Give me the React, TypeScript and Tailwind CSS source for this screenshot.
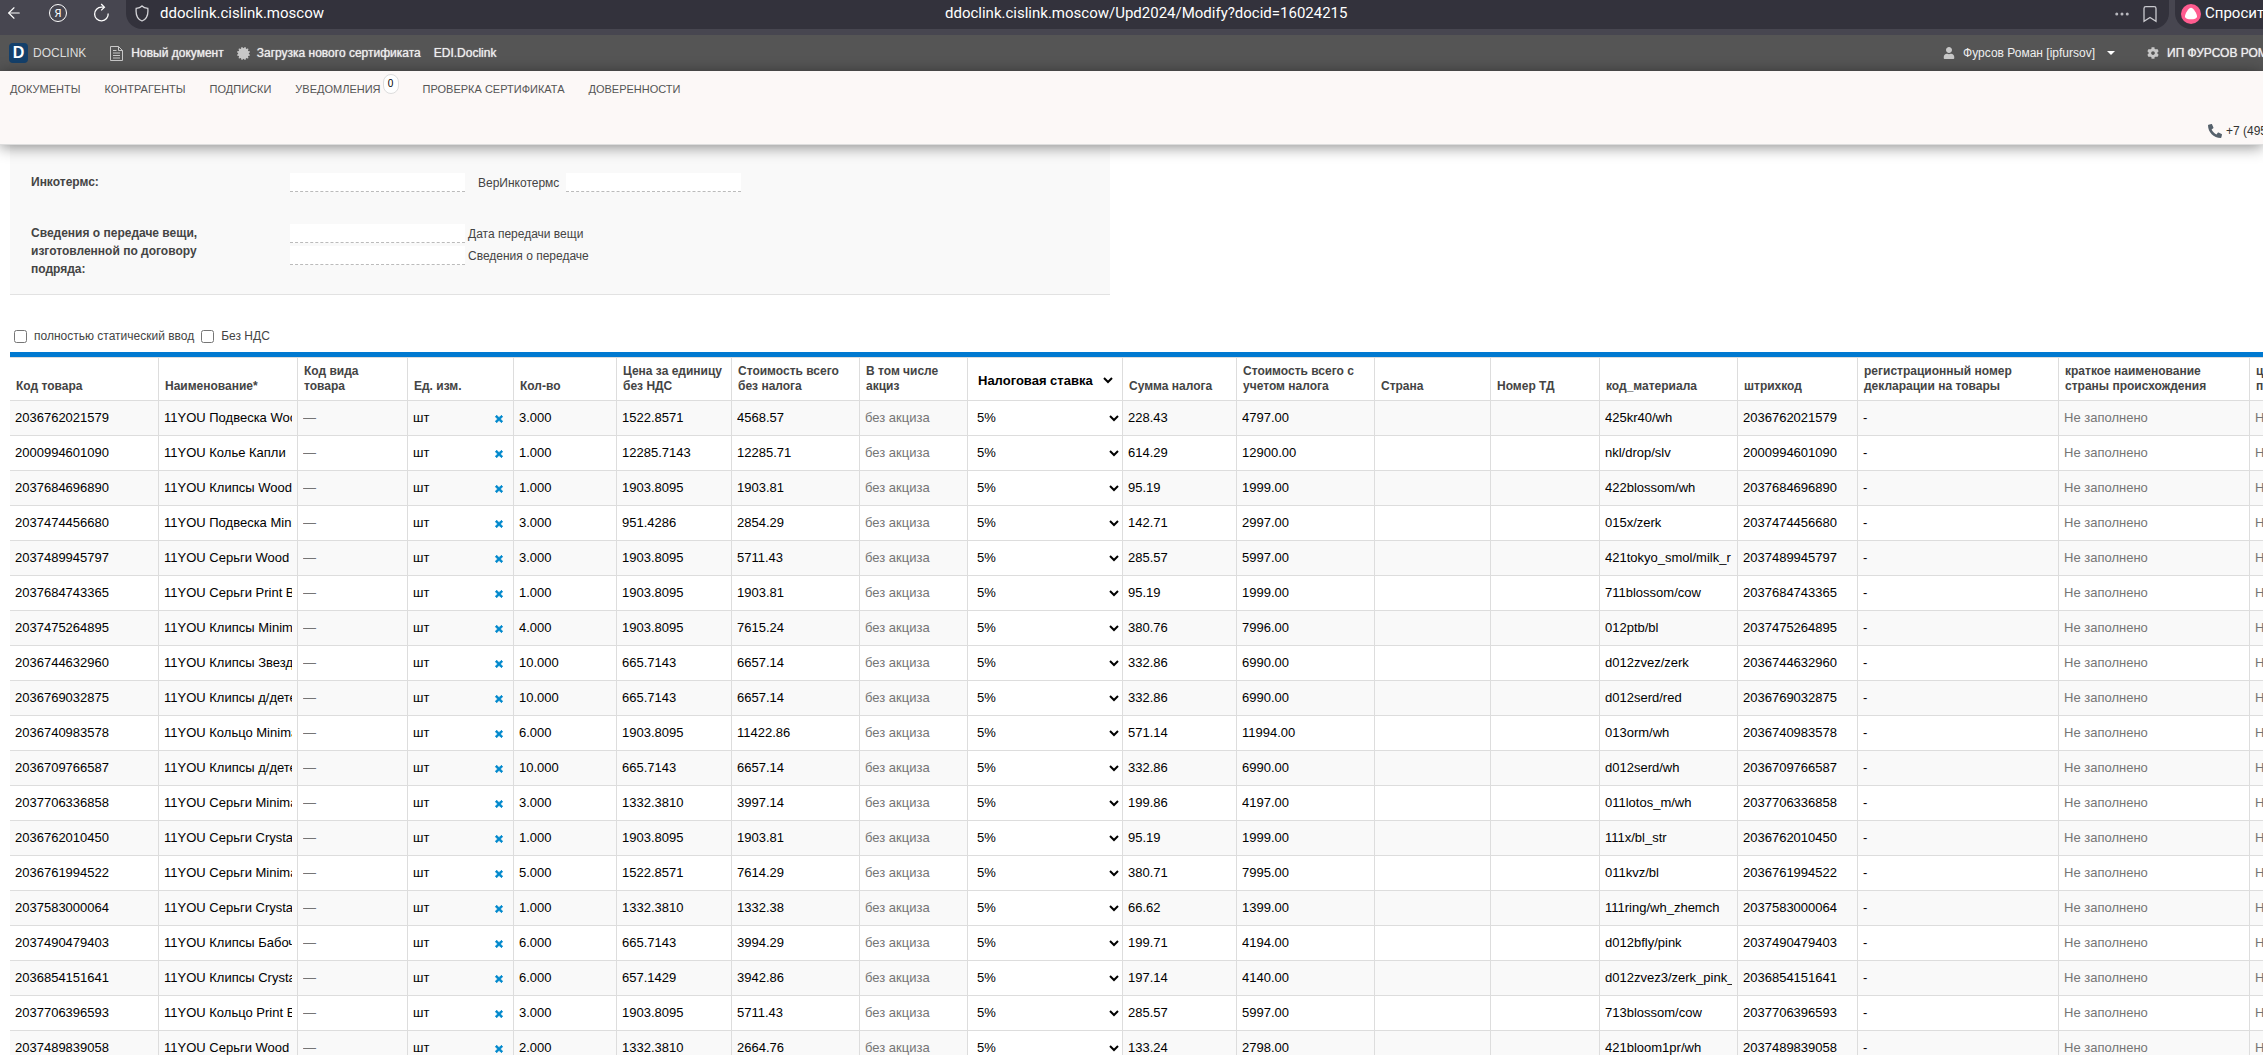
import React from "react";
import { ArrowLeft, Ellipsis } from "lucide-react";
import { FaCertificate, FaCog, FaPhone, FaTimes, FaUser } from "react-icons/fa";

type Item = {
  code: string;
  name: string;
  qty: string;
  price: string;
  net: string;
  tax: string;
  total: string;
  material: string;
};

const items: Item[] = [
  { code: "2036762021579", name: "11YOU Подвеска Wood", qty: "3.000", price: "1522.8571", net: "4568.57", tax: "228.43", total: "4797.00", material: "425kr40/wh" },
  { code: "2000994601090", name: "11YOU Колье Капли", qty: "1.000", price: "12285.7143", net: "12285.71", tax: "614.29", total: "12900.00", material: "nkl/drop/slv" },
  { code: "2037684696890", name: "11YOU Клипсы Wood", qty: "1.000", price: "1903.8095", net: "1903.81", tax: "95.19", total: "1999.00", material: "422blossom/wh" },
  { code: "2037474456680", name: "11YOU Подвеска Minimal", qty: "3.000", price: "951.4286", net: "2854.29", tax: "142.71", total: "2997.00", material: "015x/zerk" },
  { code: "2037489945797", name: "11YOU Серьги Wood", qty: "3.000", price: "1903.8095", net: "5711.43", tax: "285.57", total: "5997.00", material: "421tokyo_smol/milk_r" },
  { code: "2037684743365", name: "11YOU Серьги Print B", qty: "1.000", price: "1903.8095", net: "1903.81", tax: "95.19", total: "1999.00", material: "711blossom/cow" },
  { code: "2037475264895", name: "11YOU Клипсы Minimal", qty: "4.000", price: "1903.8095", net: "7615.24", tax: "380.76", total: "7996.00", material: "012ptb/bl" },
  { code: "2036744632960", name: "11YOU Клипсы Звезды", qty: "10.000", price: "665.7143", net: "6657.14", tax: "332.86", total: "6990.00", material: "d012zvez/zerk" },
  { code: "2036769032875", name: "11YOU Клипсы д/детей", qty: "10.000", price: "665.7143", net: "6657.14", tax: "332.86", total: "6990.00", material: "d012serd/red" },
  { code: "2036740983578", name: "11YOU Кольцо Minimal", qty: "6.000", price: "1903.8095", net: "11422.86", tax: "571.14", total: "11994.00", material: "013orm/wh" },
  { code: "2036709766587", name: "11YOU Клипсы д/детей", qty: "10.000", price: "665.7143", net: "6657.14", tax: "332.86", total: "6990.00", material: "d012serd/wh" },
  { code: "2037706336858", name: "11YOU Серьги Minimal", qty: "3.000", price: "1332.3810", net: "3997.14", tax: "199.86", total: "4197.00", material: "011lotos_m/wh" },
  { code: "2036762010450", name: "11YOU Серьги Crystal", qty: "1.000", price: "1903.8095", net: "1903.81", tax: "95.19", total: "1999.00", material: "111x/bl_str" },
  { code: "2036761994522", name: "11YOU Серьги Minimal", qty: "5.000", price: "1522.8571", net: "7614.29", tax: "380.71", total: "7995.00", material: "011kvz/bl" },
  { code: "2037583000064", name: "11YOU Серьги Crystal", qty: "1.000", price: "1332.3810", net: "1332.38", tax: "66.62", total: "1399.00", material: "111ring/wh_zhemch" },
  { code: "2037490479403", name: "11YOU Клипсы Бабочки", qty: "6.000", price: "665.7143", net: "3994.29", tax: "199.71", total: "4194.00", material: "d012bfly/pink" },
  { code: "2036854151641", name: "11YOU Клипсы Crystal", qty: "6.000", price: "657.1429", net: "3942.86", tax: "197.14", total: "4140.00", material: "d012zvez3/zerk_pink_" },
  { code: "2037706396593", name: "11YOU Кольцо Print B", qty: "3.000", price: "1903.8095", net: "5711.43", tax: "285.57", total: "5997.00", material: "713blossom/cow" },
  { code: "2037489839058", name: "11YOU Серьги Wood", qty: "2.000", price: "1332.3810", net: "2664.76", tax: "133.24", total: "2798.00", material: "421bloom1pr/wh" },
];

const columns = [
  { title: "Код товара", width: "w-[148px]" },
  { title: "Наименование*", width: "w-[139px]" },
  { title: "Код вида товара", width: "w-[110px]" },
  { title: "Ед. изм.", width: "w-[106px]" },
  { title: "Кол-во", width: "w-[103px]" },
  { title: "Цена за единицу без НДС", width: "w-[115px]" },
  { title: "Стоимость всего без налога", width: "w-[128px]" },
  { title: "В том числе акциз", width: "w-[108px]" },
  { title: "Налоговая ставка", width: "w-[155px]" },
  { title: "Сумма налога", width: "w-[114px]" },
  { title: "Стоимость всего с учетом налога", width: "w-[138px]" },
  { title: "Страна", width: "w-[116px]" },
  { title: "Номер ТД", width: "w-[109px]" },
  { title: "код_материала", width: "w-[138px]" },
  { title: "штрихкод", width: "w-[120px]" },
  { title: "регистрационный номер декларации на товары", width: "w-[201px]" },
  { title: "краткое наименование страны происхождения", width: "w-[191px]" },
  { title: "цифровой код происхождения", width: "w-[140px]" },
];

const menu = ["ДОКУМЕНТЫ", "КОНТРАГЕНТЫ", "ПОДПИСКИ", "УВЕДОМЛЕНИЯ", "ПРОВЕРКА СЕРТИФИКАТА", "ДОВЕРЕННОСТИ"];

const BrowserBar = () => (
  <div className="flex h-[35px] items-start bg-[#474650] font-['Roboto',sans-serif] text-[15px] text-white">
    <div className="flex h-[26px] w-[126px] shrink-0 items-center gap-[26px] pl-[5px]">
      <button aria-label="Назад">
        <ArrowLeft size={18} strokeWidth={1.5} />
      </button>
      <button
        aria-label="Яндекс"
        className="flex size-[18px] items-center justify-center rounded-full border border-white text-[11px] leading-none"
      >
        Я
      </button>
      <button aria-label="Обновить">
        <svg width="17" height="20" viewBox="0 0 17 20" fill="none" stroke="currentColor" strokeWidth="1.3">
          <path d="M15.2 10.5 A6.8 6.8 0 1 1 8.4 4.2 H11" />
          <path d="M8.2 1 L11.4 4.2 L8.2 7.4" />
        </svg>
      </button>
    </div>
    <div className="flex h-[29px] min-w-0 flex-1 items-center rounded-b-[16px] bg-[#33323c] pr-[10px] pb-[2px] pl-[9px]">
      <svg width="14" height="17" viewBox="0 0 14 17" fill="none" stroke="#d4d4d8" strokeWidth="1.3">
        <path d="M7 1 C5.5 2.5 3 3.2 1.2 3.4 C0.6 9 2 14 7 16 C12 14 13.4 9 12.8 3.4 C11 3.2 8.5 2.5 7 1 Z" />
      </svg>
      <span className="w-[796px] shrink-0 pl-[11px]">ddoclink.cislink.moscow</span>
      <span className="flex-1">ddoclink.cislink.moscow/Upd2024/Modify?docid=16024215</span>
      <button aria-label="Ещё" className="mr-[10px]">
        <Ellipsis size={18} className="text-[#b8b8be]" />
      </button>
      <button aria-label="Закладки">
        <svg width="18" height="18" viewBox="0 0 18 18" fill="none" stroke="#c9c9ce" strokeWidth="1.3">
          <path d="M3 16.2 V3.4 C3 2.2 3.8 1.6 4.8 1.6 H13.2 C14.2 1.6 15 2.2 15 3.4 V16.2 L9 12.4 Z" />
        </svg>
      </button>
    </div>
    <button className="ml-[6px] flex h-[29px] w-[88px] shrink-0 items-center gap-[4px] overflow-hidden rounded-bl-[16px] bg-[#33323c] pb-[2px] pl-[6px] whitespace-nowrap">
      <svg width="20" height="20" viewBox="0 0 20 20" className="shrink-0">
        <circle cx="10" cy="10" r="10" fill="#ff5c8f" />
        <path d="M10 3.8 C12.5 3.8 16 10 16 12.4 C16 14.6 13 15.2 10 15.2 C7 15.2 4 14.6 4 12.4 C4 10 7.5 3.8 10 3.8 Z" fill="#fff" />
      </svg>
      Спросить
    </button>
  </div>
);

const NavBar = () => (
  <nav className="flex h-[36px] items-center bg-[#555] text-xs whitespace-nowrap text-[#eee] [text-shadow:0_0_1px_#ddd]">
    <a href="#" className="flex items-center gap-[5px] pl-[9px] text-[#ddd] [text-shadow:none]">
      <span className="flex h-[20px] w-[19px] items-center justify-center rounded-[4px] bg-[#14406b] text-base font-bold text-white">
        D
      </span>
      DOCLINK
    </a>
    <a href="#" className="ml-[24px] flex items-center gap-[8px]">
      <svg width="13" height="15" viewBox="0 0 13 15" fill="none" stroke="#c8c8c8">
        <path d="M0.5 0.5 H8.5 L12.5 4.5 V14.5 H0.5 Z M8.5 0.5 V4.5 H12.5" />
        <path d="M3 4.5 H6.5 M3 7 H10 M3 9.5 H10 M3 12 H10" />
      </svg>
      Новый документ
    </a>
    <a href="#" className="ml-[13px] flex items-center gap-[7px]">
      <FaCertificate size={13} className="text-[#c8c8c8]" />
      Загрузка нового сертификата
    </a>
    <a href="#" className="ml-[13px]">
      EDI.Doclink
    </a>
    <div className="flex-1" />
    <button className="flex items-center gap-[8px]">
      <FaUser size={12} className="text-[#c8c8c8]" />
      Фурсов Роман [ipfursov]
      <span className="ml-[4px] border-x-4 border-t-4 border-x-transparent border-t-white" />
    </button>
    <div className="ml-[32px] flex w-[116px] items-center gap-[8px] overflow-hidden">
      <FaCog size={12} className="shrink-0 text-[#c8c8c8]" />
      ИП ФУРСОВ РОМАН
    </div>
  </nav>
);

const Menu = () => (
  <div className="relative z-10 flex h-[74px] flex-col justify-between border-b border-[#ddd] bg-[#fcf8f7] shadow-[0_2px_14px_rgba(0,0,0,0.45)]">
    <div className="flex gap-[24px] pt-[10px] pl-[10px] text-[11px] leading-4 text-[#555]">
      {menu.map((title) => (
        <a href="#" key={title} className="flex">
          {title}
          {title === "УВЕДОМЛЕНИЯ" && (
            <span className="-mt-[7px] ml-[2px] flex h-[20px] w-[16px] items-center justify-center rounded-full border border-[#ddd] bg-white text-[10px] text-black">
              0
            </span>
          )}
        </a>
      ))}
    </div>
    <div className="flex items-center gap-[4px] self-end pb-[5px] text-xs leading-4 text-[#333]">
      <FaPhone size={14} className="-scale-x-100 text-[#56616c]" />
      <span className="w-[37px] overflow-hidden whitespace-nowrap">+7 (495)</span>
    </div>
  </div>
);

const Field = ({ id }: { id: string }) => (
  <input id={id} type="text" className="h-[19px] w-[175px] border-b border-dashed border-[#bbb] bg-white" />
);

const TransferForm = () => (
  <section className="w-[1100px] border-b border-[#e2e2e2] bg-[#f9f9f9] pt-[28px] pb-[16px] pl-[21px] leading-[18px]">
    <div className="flex h-[51px]">
      <label htmlFor="incoterms" className="w-[259px] font-bold">
        Инкотермс:
      </label>
      <div className="flex items-start">
        <Field id="incoterms" />
        <label htmlFor="incoterms-ver" className="mr-[7px] ml-[13px] pt-px">
          ВерИнкотермс
        </label>
        <Field id="incoterms-ver" />
      </div>
    </div>
    <div className="flex">
      <div className="w-[259px]">
        <p className="w-[180px] font-bold">Сведения о передаче вещи, изготовленной по договору подряда:</p>
      </div>
      <div className="flex flex-col gap-[3px]">
        <div className="flex gap-[3px]">
          <Field id="transfer-date" />
          <label htmlFor="transfer-date" className="pt-px">
            Дата передачи вещи
          </label>
        </div>
        <div className="flex gap-[3px]">
          <Field id="transfer-info" />
          <label htmlFor="transfer-info" className="pt-px">
            Сведения о передаче
          </label>
        </div>
      </div>
    </div>
  </section>
);

const Cell = ({ label, value, placeholder }: { label: string; value?: string; placeholder?: string }) => (
  <td className="border-b border-l border-[#ddd] px-[5px] first:border-l-0">
    <input
      type="text"
      aria-label={label}
      defaultValue={value}
      placeholder={placeholder}
      className="block h-[32px] w-full bg-transparent pb-[2px] text-[13px] text-black placeholder:text-[#757575]"
    />
  </td>
);

const ItemRow = ({ item }: { item: Item }) => (
  <tr className="h-[35px] odd:bg-[#f9f9f9]">
    <Cell label="Код товара" value={item.code} />
    <Cell label="Наименование" value={item.name} />
    <Cell label="Код вида товара" placeholder="—" />
    <td className="border-b border-l border-[#ddd] pr-[9px] pl-[5px]">
      <div className="flex items-center">
        <input
          type="text"
          aria-label="Ед. изм."
          defaultValue="шт"
          className="h-[32px] w-full min-w-0 bg-transparent pb-[2px] text-[13px] text-black"
        />
        <button aria-label="Очистить" className="pt-[2px] text-[#08c]">
          <FaTimes size={10} strokeWidth={50} stroke="currentColor" />
        </button>
      </div>
    </td>
    <Cell label="Кол-во" value={item.qty} />
    <Cell label="Цена за единицу без НДС" value={item.price} />
    <Cell label="Стоимость всего без налога" value={item.net} />
    <Cell label="Акциз" placeholder="без акциза" />
    <td className="border-b border-l border-[#ddd] bg-white">
      <select aria-label="Налоговая ставка" className="block h-[32px] w-full bg-white pb-[2px] pl-[5px] text-[13px] text-black">
        <option>5%</option>
        <option>10%</option>
        <option>20%</option>
      </select>
    </td>
    <Cell label="Сумма налога" value={item.tax} />
    <Cell label="Стоимость всего с учетом налога" value={item.total} />
    <Cell label="Страна" />
    <Cell label="Номер ТД" />
    <Cell label="код_материала" value={item.material} />
    <Cell label="штрихкод" value={item.code} />
    <Cell label="регистрационный номер декларации" value="-" />
    <Cell label="страна происхождения" placeholder="Не заполнено" />
    <Cell label="цифровой код страны" placeholder="Не заполнено" />
  </tr>
);

const ItemsTable = () => (
  <table className="w-[2379px] table-fixed border-separate border-spacing-0 border-t-[5px] border-[#0079d0]">
    <thead>
      <tr className="h-[44px]">
        {columns.map(({ title, width }) => (
          <th
            key={title}
            className={`${width} border-t border-b border-l border-[#ddd] px-[6px] pb-[6px] text-left align-bottom leading-[15px] first:border-l-0`}
          >
            {title === "Налоговая ставка" ? (
              <select aria-label="Налоговая ставка" className="mb-[5px] block w-[142px] bg-white text-[13px] font-bold text-black">
                <option>Налоговая ставка</option>
              </select>
            ) : (
              title
            )}
          </th>
        ))}
      </tr>
    </thead>
    <tbody>
      {items.map((item) => (
        <ItemRow key={item.code} item={item} />
      ))}
    </tbody>
  </table>
);

const App = () => {
  return (
    <div className="h-screen overflow-hidden bg-white font-['Liberation_Sans',sans-serif] text-xs text-[#444]">
      <BrowserBar />
      <NavBar />
      <Menu />
      <main className="pl-[10px]">
        <TransferForm />
        <div className="flex h-[57px] items-end gap-[7px] pb-[7px] pl-[4px] leading-[18px]">
          <label className="flex items-center gap-[7px]">
            <input type="checkbox" className="size-[13px]" />
            полностью статический ввод
          </label>
          <label className="flex items-center gap-[7px]">
            <input type="checkbox" className="size-[13px]" />
            Без НДС
          </label>
        </div>
        <ItemsTable />
      </main>
    </div>
  );
};

export default App;
